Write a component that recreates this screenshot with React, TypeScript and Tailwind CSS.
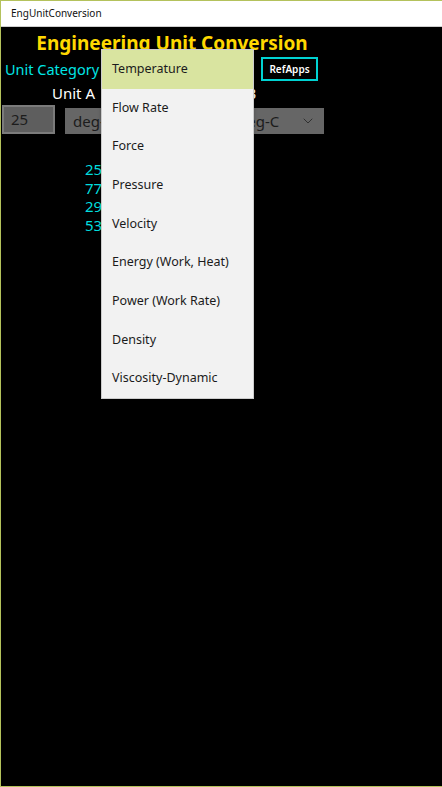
import { ChevronDown } from "lucide-react";

const categories = [
  "Temperature",
  "Flow Rate",
  "Force",
  "Pressure",
  "Velocity",
  "Energy (Work, Heat)",
  "Power (Work Rate)",
  "Density",
  "Viscosity-Dynamic",
];

const results = ["25.000 deg-C", "77.000 deg-F", "298.15 K", "536.67 R"];

export default function App() {
  return (
    <main
      className="relative flex h-[787px] w-[442px] flex-col overflow-hidden border-b border-l border-t border-[#b4c25c] bg-black"
      style={{ fontFamily: '"Noto Sans", "Open Sans", sans-serif' }}
    >
      <header className="flex h-[26px] shrink-0 items-center border-b border-[#cfcfcf] bg-white pl-[10px] text-[10px] text-[#111]">
        EngUnitConversion
      </header>

      <section className="flex-1">
        <h1 className="mt-[3px] w-[342px] text-center text-[19px] font-bold leading-[26px] text-[#ffd800]">
          Engineering Unit Conversion
        </h1>

        <div className="mt-[1px] flex h-[24px] items-center">
          <span className="w-[260px] pl-[4px] text-[14.5px] leading-none text-[#00e5e5]">
            Unit Category
          </span>
          <span className="flex h-[24px] w-[57px] items-center justify-center border-2 border-[#00d2d2] text-[10px] font-semibold text-white">
            RefApps
          </span>
        </div>

        <div className="flex h-[24px] items-center text-[15px] text-white">
          <span className="ml-[51px]">Unit A</span>
          <span className="ml-[118px]">Unit B</span>
        </div>

        <div className="flex items-end">
          <div className="ml-[1px] flex h-[29px] w-[53px] items-center border-2 border-[#7b7b7b] bg-[#5e5e5e] pl-[7px] text-[15px] text-[#1c1c1c]">
            25
          </div>
          <div className="ml-[10px] flex h-[26px] w-[154px] items-center bg-[#666] pl-[8px] text-[15px] text-[#1c1c1c]">
            deg-F
          </div>
          <div className="ml-[9px] flex h-[26px] w-[96px] items-center justify-between bg-[#666] pl-[10px] pr-[8px] text-[15px] text-[#1c1c1c]">
            deg-C
            <ChevronDown size={16} strokeWidth={1.2} className="text-[#222]" />
          </div>
        </div>

        <div className="mt-[26px] flex flex-col pl-[84px] text-[15px] leading-[18.5px] text-[#00dede]">
          {results.map((line) => (
            <span key={line}>{line}</span>
          ))}
        </div>
      </section>

      <ul className="absolute left-[100px] top-[48px] w-[153px] border border-[#cccccc] bg-[#f2f2f2] text-[12.5px] text-[#1b1b1b] shadow-[0_1px_4px_rgba(0,0,0,0.2)]">
        {categories.map((name, index) => (
          <li
            key={name}
            className={`flex h-[38.7px] items-center pl-[10px] ${
              index === 0 ? "bg-[#d9e4a0]" : ""
            }`}
          >
            {name}
          </li>
        ))}
      </ul>
    </main>
  );
}
